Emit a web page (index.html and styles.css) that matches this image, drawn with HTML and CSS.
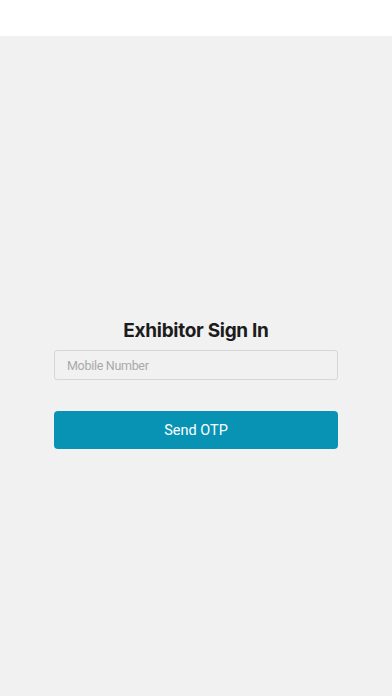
FILE: index.html
```html
<!DOCTYPE html>
<html>
<head>
<meta charset="utf-8">
<link rel="stylesheet" href="styles.css">
</head>
<body>
<div class="topbar"></div>
<main class="screen">
  <form class="signin">
    <h1 class="title">Exhibitor Sign In</h1>
    <input class="field" type="tel" placeholder="Mobile Number">
    <button class="send" type="button">Send OTP</button>
  </form>
</main>
</body>
</html>
```
FILE: styles.css
```css
html, body {
  margin: 0;
  padding: 0;
}
body {
  width: 392px;
  height: 696px;
  overflow: hidden;
  font-family: Inter, "Liberation Sans", sans-serif;
  background: #f1f1f1;
}
.topbar {
  height: 36px;
  background: #ffffff;
}
.screen {
  height: 660px;
  background: #f1f1f1;
  display: flex;
  justify-content: center;
}
.signin {
  width: 284px;
  padding-top: 283px;
  display: flex;
  flex-direction: column;
}
.title {
  margin: 0;
  text-align: center;
  font-size: 19px;
  font-weight: 700;
  color: #1c1c1c;
  line-height: 24px;
  letter-spacing: -0.3px;
}
.field {
  margin-top: 7px;
  box-sizing: border-box;
  height: 30px;
  border: 1px solid #d6d6d6;
  border-radius: 3px;
  background: #f1f1f1;
  padding: 0 12px;
  font-family: Roboto, "Liberation Sans", sans-serif;
  font-size: 12.5px;
  letter-spacing: -0.3px;
  color: #333;
  outline: none;
}
.field::placeholder {
  color: #a9a9a9;
}
.send {
  margin-top: 31px;
  height: 38px;
  border: none;
  border-radius: 4px;
  background: #0893b5;
  color: #ffffff;
  font-family: Roboto, "Liberation Sans", sans-serif;
  font-size: 14.5px;
  font-weight: 400;
  cursor: pointer;
}
```
